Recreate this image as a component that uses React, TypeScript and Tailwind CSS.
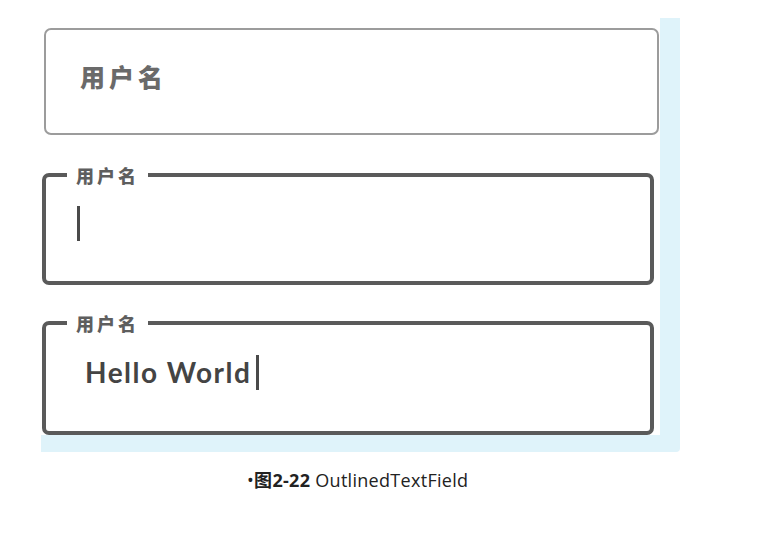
import React from "react";

const cjk = { fontFamily: '"Noto Sans CJK SC", "Noto Sans", sans-serif' };

function OutlinedField({ children, tall }: { children: React.ReactNode; tall?: boolean }) {
  return (
    <fieldset
      className={`ml-[1px] w-[612px] ${tall ? "h-[121px]" : "h-[119px]"} border-[4px] border-[#5a5a5a] rounded-[7px] px-[20px] pt-0 pb-0 m-0`}
    >
      <legend
        className="ml-[1px] px-[9px] text-[18px] leading-[18px] font-black text-[#5e5e5e] tracking-[3px]"
        style={cjk}
      >
        用户名
      </legend>
      {children}
    </fieldset>
  );
}

export default function App() {
  return (
    <div className="w-[757px] h-[554px] bg-white relative">
      <div className="pt-[18px] pl-[41px]">
        <div className="w-[639px] h-[434px] bg-[#dff3fa] rounded-br-[4px]">
          <div className="w-[619px] h-[417px] bg-white flex flex-col">
            <div className="ml-[3px] mt-[10px] w-[615px] h-[107px] border-2 border-[#9c9c9c] rounded-[7px] flex items-center pl-[34px] pb-[10px]">
              <span className="text-[25px] font-black text-[#6a6a6a] tracking-[4px]" style={cjk}>
                用户名
              </span>
            </div>
            <div className="mt-[31px]">
              <OutlinedField>
                <div className="mt-[22px] ml-[11px] w-[3px] h-[35px] bg-[#4a4a4a]" />
              </OutlinedField>
            </div>
            <div className="mt-[29px]">
              <OutlinedField tall>
                <div className="mt-[22px] ml-[19px] flex items-center">
                  <span
                    className="text-[28px] leading-[36px] font-bold text-[#444444] tracking-[1.5px]"
                    style={{ fontFamily: 'Lato, "Noto Sans", sans-serif' }}
                  >
                    Hello World
                  </span>
                  <div className="ml-[5px] w-[3px] h-[35px] bg-[#4a4a4a]" />
                </div>
              </OutlinedField>
            </div>
          </div>
        </div>
      </div>
      <div
        className="mt-[16px] pl-[247px] text-[18px] leading-[22px] text-[#222222] tracking-[0.3px]"
        style={{ fontFamily: '"Open Sans", "Noto Sans CJK SC", sans-serif' }}
      >
        •<span className="font-bold" style={{ fontFamily: '"Noto Sans CJK SC", sans-serif' }}>图</span>
        <span className="font-bold">2-22</span> OutlinedTextField
      </div>
    </div>
  );
}
